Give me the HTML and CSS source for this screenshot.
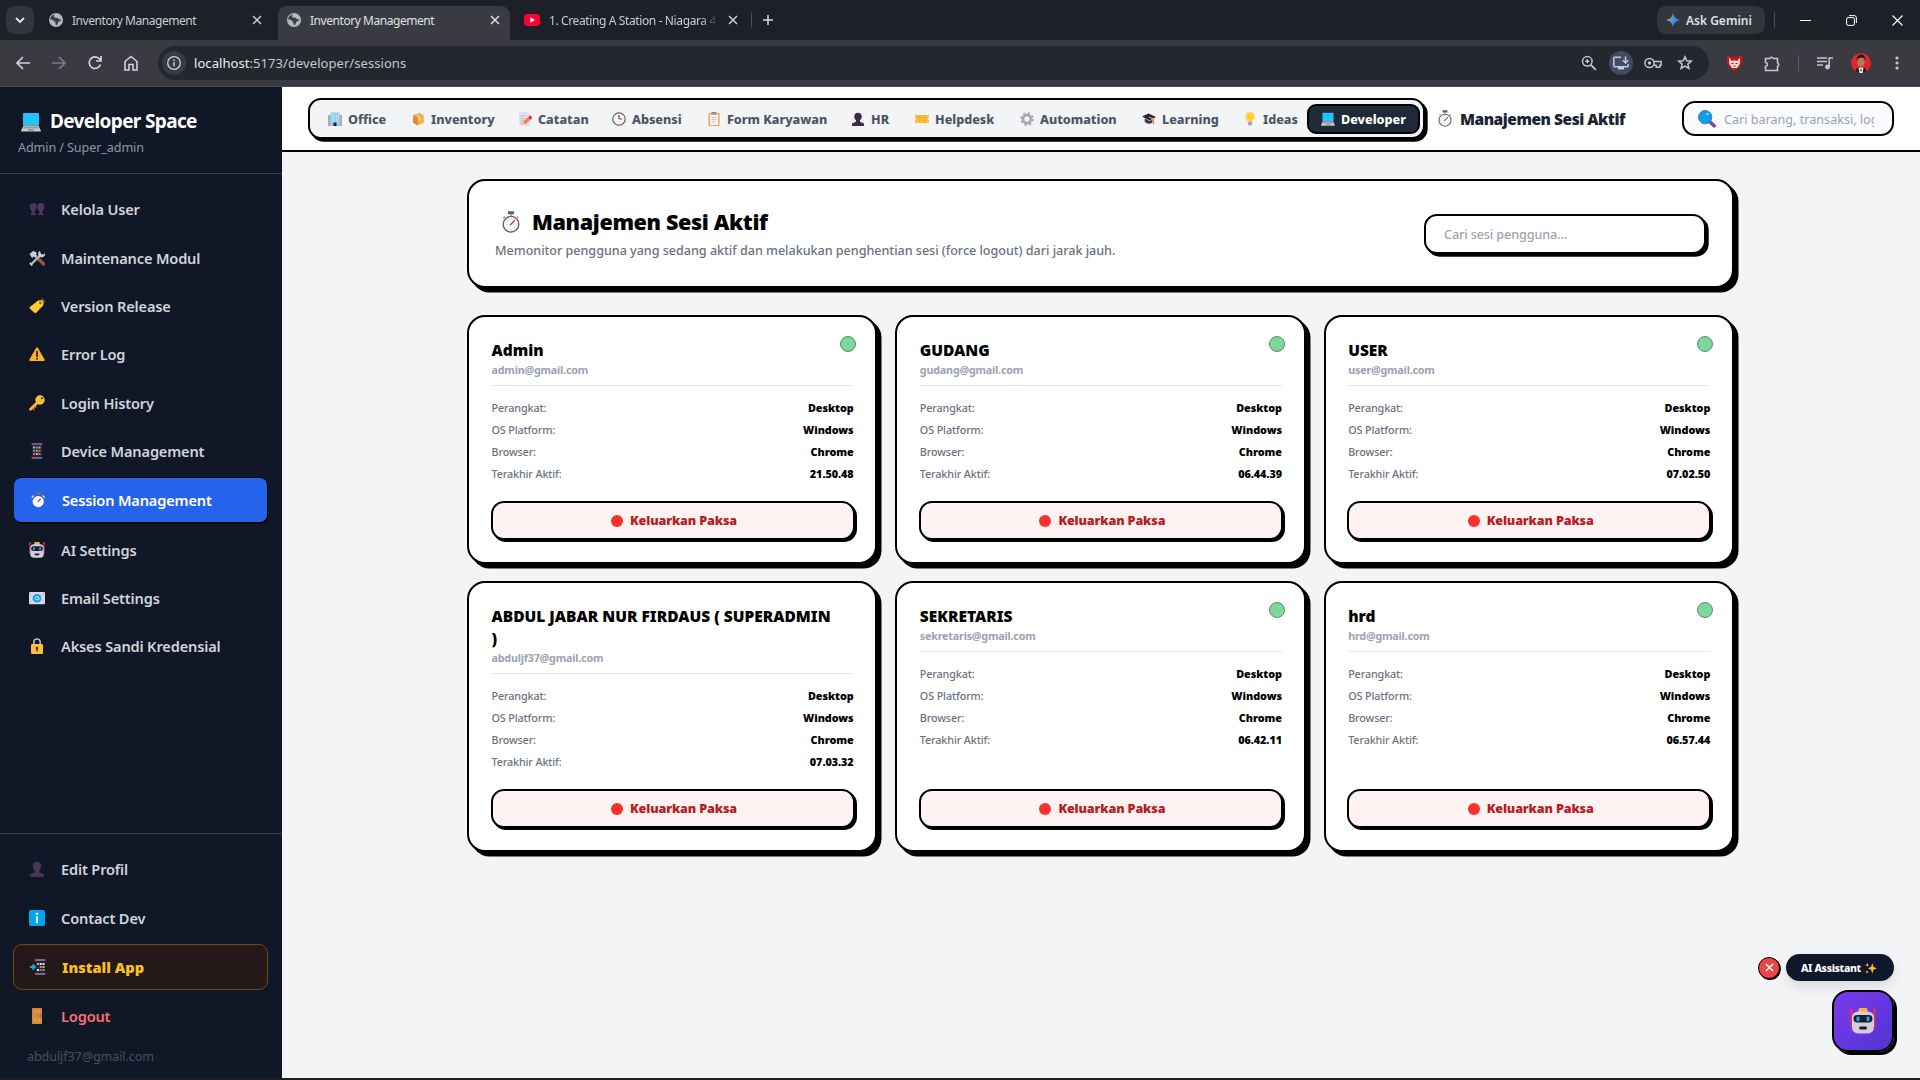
FILE: index.html
```html
<!DOCTYPE html>
<html lang="id">
<head>
<meta charset="utf-8">
<title>Inventory Management</title>
<link rel="stylesheet" href="styles.css">
</head>
<body>
<svg class="sprite" aria-hidden="true">
  <defs>
    <linearGradient id="gem" x1="0" y1="0.3" x2="1" y2="0.7"><stop offset="0" stop-color="#f5b942"/><stop offset="0.35" stop-color="#6f9c9a"/><stop offset="0.55" stop-color="#3f8bf4"/><stop offset="1" stop-color="#4a90ff"/></linearGradient>
    <symbol id="i-laptop" viewBox="0 0 20 20"><rect x="2" y="1" width="16" height="12.5" rx="1" fill="#26c0fb"/><path d="M2.500 13.500h15l2.300 5v1H.2v-1z" fill="#c9c9c9"/><path d="M3 14.500h14l.7 2H2.300z" fill="#9b9b9b"/><path d="M7 17.300h6v1.500H7z" fill="#8a8a8a"/></symbol>
    <symbol id="i-users" viewBox="0 0 16 16"><g fill="#4d365f"><path d="M4.200 2c2.300 0 3.600 1.700 3.600 3.800 0 1.700-1 3-1.900 3.900L5.600 12l1.800 2H1l1.800-2-.3-2.300C1.600 8.800.6 7.500.6 5.800.6 3.700 1.900 2 4.200 2z"/><path d="M11.800 2c2.300 0 3.600 1.700 3.600 3.800 0 1.700-1 3-1.900 3.900l-.3 2.300 1.800 2H8.600l1.800-2-.3-2.300c-.9-.9-1.900-2.200-1.900-3.900C8.200 3.700 9.500 2 11.800 2z"/></g></symbol>
    <symbol id="i-user" viewBox="0 0 16 16"><path d="M8 .8c2.500 0 4.300 1.900 4.300 4.300 0 1.900-.9 3.400-2 4.300v1.800l4.500 2V16H1.200v-2.800l4.500-2V9.400c-1.100-.9-2-2.400-2-4.300C3.700 2.700 5.500.8 8 .8z" fill="currentColor"/></symbol>
    <symbol id="i-tools" viewBox="0 0 16 16"><path d="M9 8.500l5.500 5.500" stroke="#a0563f" stroke-width="3.200" stroke-linecap="round"/><path d="M3 13.500L11.500 5" stroke="#b8bcc8" stroke-width="2.200" stroke-linecap="round"/><path d="M.5 4L4.500.8 8 3l-1 1.500L8.500 6 6.500 8 5 6.500 3 8z" fill="#c9cdd8"/><path d="M11 1l1 3 3 .5.8-2.300.2 3.300-2.500 2-3-.5L9 4.500 9.500 2z" fill="#c9cdd8"/><path d="M1 12l3 3-1.500 1L.5 14z" fill="#c9cdd8"/></symbol>
    <symbol id="i-tag" viewBox="0 0 16 16"><path d="M9 2.500l4.500-.3 1 .8-.3 4.500-7 7.300a1.200 1.200 0 0 1-1.700 0L.9 10.700a1.200 1.200 0 0 1 0-1.700z" fill="#ffc938"/><circle cx="11.400" cy="5" r="1.300" fill="#8a5a14"/><path d="M12 1.500c2.500-1.500 4.500 1 2.500 4" fill="none" stroke="#9a7a40" stroke-width=".9"/></symbol>
    <symbol id="i-warn" viewBox="0 0 16 16"><path d="M7.200 1.700a.9.900 0 0 1 1.600 0l6.800 11.900a.9.900 0 0 1-.8 1.400H1.200a.9.900 0 0 1-.8-1.400z" fill="#ffb02e"/><path d="M8 5.500v4.700" stroke="#2b2030" stroke-width="1.700" stroke-linecap="round"/><circle cx="8" cy="12.700" r="1" fill="#2b2030"/></symbol>
    <symbol id="i-key" viewBox="0 0 16 16"><path d="M8.500 7.500L1.500 14.300" stroke="#ffb92e" stroke-width="2.700" stroke-linecap="round"/><path d="M3.500 13l1.800 1.800M5.500 11l1.500 1.500" stroke="#e39d1f" stroke-width="1.300"/><circle cx="11" cy="5" r="4.700" fill="#ffbf38"/><circle cx="13" cy="3.300" r="1.100" fill="#54371a"/></symbol>
    <symbol id="i-phone" viewBox="0 0 16 16"><path d="M2.500 1a1 1 0 0 1 1-1h9a1 1 0 0 1 1 1v1h-11zM2.500 14h11v1a1 1 0 0 1-1 1h-9a1 1 0 0 1-1-1z" fill="#6c5a94"/><rect x="3" y="2" width="10" height="12" fill="#2b2233"/><g><path fill="#ffb02e" d="M4 3.500h2v2H4zM9.500 3.500h2v2h-2zM6.800 10h2v2h-2z"/><path fill="#26b4f0" d="M6.800 3.500h2v2h-2zM4 6.800h2v2H4zM9.500 10h2v2h-2z"/><path fill="#e8613c" d="M9.500 6.800h2v2h-2zM4 10h2v2H4z"/><path fill="#7fc98c" d="M6.800 6.800h2v2h-2z"/></g></symbol>
    <symbol id="i-install" viewBox="0 0 16 16"><path d="M5 1a1 1 0 0 1 1-1h8.500a1 1 0 0 1 1 1v1H5zM5 14h10.500v1a1 1 0 0 1-1 1H6a1 1 0 0 1-1-1z" fill="#7a669f"/><rect x="6" y="2" width="9" height="12" fill="#2b2233"/><path fill="#ffb02e" d="M7 4h2v2H7zM12.500 7h2v2h-2z"/><path fill="#e8e0f0" d="M9.800 4h2v2h-2zM7 10h2v2H7zM12.500 4h2v2h-2z"/><path fill="#5aa6e8" d="M9.800 7h2v2h-2zM12.500 10h2v2h-2z"/><path fill="#e8613c" d="M9.800 10h2v2h-2z"/><path d="M0 8h5M2.500 5.500L5 8l-2.500 2.500" stroke="#18a8e8" stroke-width="1.800" fill="none"/></symbol>
    <symbol id="i-watch" viewBox="0 0 18 22"><rect x="5.800" y=".3" width="6.400" height="3" rx=".8" fill="#5d6064"/><path d="M9 3v3M15 5.500l1.500 1.500M3 5.500L1.500 7" stroke="#8b8d91" stroke-width="1.300"/><circle cx="9" cy="13.200" r="7.800" fill="#fdfdfd" stroke="#626569" stroke-width="1.400"/><path d="M9 7.500v1.300M9 17.700V19M3.300 13.200h1.300M13.500 13.200h1.300M5 9l.8.800M5 17.300l.8-.8M13 17.300l-.8-.8" stroke="#aeb2b6" stroke-width=".9"/><path d="M8.500 13.800l4-4.300" stroke="#e0344c" stroke-width="1.400" stroke-linecap="round"/></symbol>
    <symbol id="i-watchw" viewBox="0 0 16 16"><rect x="6" y="0" width="4.500" height="3" fill="#6b6f7a"/><path d="M1.800 5.800l2-2.300M14.700 5.800l-2-2.300" stroke="#d8c8c0" stroke-width="1.500"/><circle cx="8.200" cy="9.600" r="5.600" fill="#fff"/><path d="M8 9.800l2.800-3" stroke="#e0344c" stroke-width="1.300"/></symbol>
    <symbol id="i-robot" viewBox="0 0 26 26"><path d="M1.500 1v18M24.500 1v18" stroke="#f0304c" stroke-width="1.700"/><circle cx="1.700" cy="2" r="1.500" fill="#f0304c"/><circle cx="24.300" cy="2" r="1.500" fill="#f0304c"/><rect x="8.500" y="0" width="9" height="5" rx="1.500" fill="#ffb02e"/><rect x="2" y="3.500" width="22" height="22" rx="6" fill="#d3cbe0"/><rect x="3.500" y="7" width="19" height="7.600" rx="3.800" fill="#1f1c26"/><rect x="6.500" y="8.500" width="3" height="4.800" rx="1" fill="#1aa7ec"/><rect x="16.500" y="8.500" width="3" height="4.800" rx="1" fill="#1aa7ec"/><rect x="9" y="18.500" width="8" height="3" rx="1.500" fill="#1f1c26"/></symbol>
    <symbol id="i-mail" viewBox="0 0 16 16"><rect x="0" y="2" width="16" height="12.300" rx="1" fill="#dcd8ea"/><path d="M0 3l6 5-6 5M16 3l-6 5 6 5" fill="none" stroke="#b6aecb" stroke-width=".7"/><circle cx="8" cy="8.200" r="4.300" fill="#159fe6"/><circle cx="8" cy="8.200" r="1.700" fill="none" stroke="#d9f2ff" stroke-width=".9"/><path d="M9.700 7v1.800q.8 1 1.300-.3" fill="none" stroke="#d9f2ff" stroke-width=".8"/></symbol>
    <symbol id="i-lock" viewBox="0 0 16 16"><path d="M4.800 7V4.200a3.200 3.200 0 0 1 6.400 0V7" fill="none" stroke="#b8bcc8" stroke-width="1.500"/><rect x="2" y="6" width="12" height="10" rx="1.300" fill="#ffbf38"/><circle cx="8" cy="10" r="1.300" fill="#3a2a1a"/><path d="M8 10v3.500" stroke="#3a2a1a" stroke-width="1.300"/></symbol>
    <symbol id="i-info" viewBox="0 0 16 16"><rect width="16" height="16" rx="2" fill="#00a6ed"/><circle cx="8" cy="3.700" r="1.300" fill="#fff"/><path d="M8 6.300v7" stroke="#fff" stroke-width="2"/></symbol>
    <symbol id="i-door" viewBox="0 0 16 16"><rect x="3" y="0" width="10" height="16" rx=".8" fill="#d3883e"/><path d="M5 2h2.500v3H5zM8.700 2h2.500v3H8.700zM5 10h2.500v4H5zM8.700 10h2.500v4H8.700z" fill="#e39a50"/><circle cx="11.500" cy="8" r=".8" fill="#6d4522"/></symbol>
    <symbol id="i-office" viewBox="0 0 14 14"><path d="M0 3h3v11H0zM11 3h3v11h-3z" fill="#a9adb5"/><rect x="2.500" y=".5" width="9" height="13.500" fill="#8ecdf2"/><path d="M4 2v9M6.200 2v9M8.400 2v9M10.300 2v9" stroke="#bfe4fa" stroke-width=".9"/><rect x="5.500" y="10.500" width="3" height="3.500" fill="#222"/></symbol>
    <symbol id="i-box" viewBox="0 0 14 14"><path d="M2.500 3L9 .8l3.700 2.600v7.300L6.500 13.500 2 10.500z" fill="#f5ae4a"/><path d="M2.500 3L6.700 6v7.400L2 10.500z" fill="#e0892f"/><path d="M5 2.200l4.300 3v3l-1.500.6V6z" fill="#ffe0a8"/></symbol>
    <symbol id="i-memo" viewBox="0 0 14 14"><path d="M1 0h8l3 3v11H1z" fill="#e2e0ea"/><path d="M2.500 4h5M2.500 6.500h4M2.500 9h3M2.500 11.500h6" stroke="#b6b0c6" stroke-width=".8"/><path d="M11.500 6.300L6 11" stroke="#ff7b3a" stroke-width="3.400"/><path d="M13.500 4.600L11.300 6.500" stroke="#e8305c" stroke-width="3.400"/><path d="M3.500 13l1.300-3 2 2z" fill="#ffc98a"/></symbol>
    <symbol id="i-clock" viewBox="0 0 14 14"><circle cx="7" cy="7" r="6.200" fill="#f6f6f6" stroke="#61656b" stroke-width="1.200"/><path d="M7 3v4" stroke="#3b3f45" stroke-width="1.100"/><path d="M7 7h3.300" stroke="#d43a5a" stroke-width="1.100"/></symbol>
    <symbol id="i-clip" viewBox="0 0 14 14"><rect x="1.500" y="1" width="11" height="13" rx="1" fill="#eda860"/><rect x="3" y="2.500" width="8" height="10.500" fill="#f6f3fb"/><path d="M4.500 5.500h5M4.500 7.700h5M4.500 10h3.500" stroke="#b9b2cc" stroke-width=".8"/><rect x="4.500" y="0" width="5" height="2.500" fill="#8a8e98"/></symbol>
    <symbol id="i-ticket" viewBox="0 0 14 14"><path d="M0 3h14v2.800a1.300 1.300 0 0 0 0 2.500V11H0V8.300a1.300 1.300 0 0 0 0-2.500z" fill="#ffbe3a"/><path d="M9.500 3v8" stroke="#d98c1c" stroke-width=".9" stroke-dasharray="1.300 1"/><path d="M2.500 5.500h5M2.500 8h3.500" stroke="#e8a02a" stroke-width=".9"/></symbol>
    <symbol id="i-gear" viewBox="0 0 14 14"><circle cx="7" cy="7" r="5.900" fill="none" stroke="#a6a4b0" stroke-width="1.800" stroke-dasharray="2.300 2.330"/><circle cx="7" cy="7" r="3.900" fill="none" stroke="#a6a4b0" stroke-width="2.500"/></symbol>
    <symbol id="i-cap" viewBox="0 0 14 14"><path d="M0 4.500L6.500 1.500 14 5 7.500 8.500z" fill="#2e2238"/><path d="M2.700 6.500v3.300Q6 13.500 10.500 10.500V7.400L7.500 9z" fill="#463457"/><path d="M7 5l4.500 2v5.500" fill="none" stroke="#f09a2a" stroke-width="1.300"/></symbol>
    <symbol id="i-bulb" viewBox="0 0 14 14"><path d="M7 0c2.700 0 4.600 2 4.600 4.500 0 2.200-1.500 3-2.100 5h-5c-.6-2-2.100-2.800-2.100-5C2.400 2 4.300 0 7 0z" fill="#ffd43a"/><rect x="5" y="9.500" width="4" height="4" rx="1" fill="#a9a6b3"/><path d="M5.500 4.500L7 6l1.500-1.500" fill="none" stroke="#f0a020" stroke-width=".8"/></symbol>
    <symbol id="i-search" viewBox="0 0 18 18"><path d="M11.500 11.500l4.600 4.300" stroke="#6a4f9c" stroke-width="3.600" stroke-linecap="round"/><circle cx="7.200" cy="7.200" r="6.600" fill="#0d9fea" stroke="#4f6db4" stroke-width="1"/><circle cx="9.500" cy="4" r="1" fill="#bfe9ff"/></symbol>
    <symbol id="i-globe" viewBox="0 0 14 14"><circle cx="7" cy="7" r="7" fill="#b4b7be"/><path d="M6.500 1.200L5 2.200v1.600L7 5l1.800-.3.700 1.300 2.200.3V8l-1.500.3-1.200 1.500-1.200 2.700-1.300-1.200V9L4.800 8.300 4.300 7 1 6.200A6.200 6.200 0 0 1 6.500 1.200z" fill="#3c3f47"/></symbol>
    <symbol id="i-x" viewBox="0 0 10 10"><path d="M1 1l8 8M9 1L1 9" stroke="currentColor" stroke-width="1.500" fill="none"/></symbol>
    <symbol id="i-spark" viewBox="0 0 12 12"><path d="M7.300 1.300L8.600 5l3.400 1.300L8.600 7.700 7.300 11.500 6 7.700 2.600 6.300 6 5z" fill="#ffb92e"/><path d="M2.200 1l.6 1.400 1.400.6-1.400.6-.6 1.400-.6-1.400L.2 3l1.400-.6zM2 8.300l.5 1.200 1.200.5-1.200.5L2 11.700l-.5-1.200L.3 10l1.200-.5z" fill="#ffc94a"/></symbol>
  </defs>
</svg>

<div class="tabstrip">
  <span class="tab-search"><svg width="10" height="10" viewBox="0 0 10 10"><path d="M1 3l4 4 4-4" fill="none" stroke="#e3e5ea" stroke-width="1.800"/></svg></span>
  <div class="tab"><svg class="fav"><use href="#i-globe"/></svg><span class="tab-title">Inventory Management</span><svg class="close"><use href="#i-x"/></svg></div>
  <div class="tab tab-active"><svg class="fav"><use href="#i-globe"/></svg><span class="tab-title">Inventory Management</span><svg class="close"><use href="#i-x"/></svg></div>
  <div class="tab tab-yt"><svg class="yt" viewBox="0 0 16 12"><rect width="16" height="12" rx="3" fill="#ff0033"/><path d="M6.300 3.200v5.600L11 6z" fill="#fff"/></svg><span class="tab-title fade">1. Creating A Station - Niagara 4</span><svg class="close"><use href="#i-x"/></svg></div>
  <span class="tab-sep"></span>
  <svg class="plus" viewBox="0 0 10 10"><path d="M5 0v10M0 5h10" stroke="#d5d8de" stroke-width="1.500"/></svg>
  <div class="gemini"><svg width="14" height="14" viewBox="0 0 14 14"><path d="M7 0c.6 4 3 6.400 7 7-4 .6-6.400 3-7 7-.6-4-3-6.400-7-7 4-.6 6.400-3 7-7z" fill="url(#gem)"/></svg><span>Ask Gemini</span></div>
  <span class="tab-sep win-sep"></span>
  <div class="win">
    <svg viewBox="0 0 11 11"><path d="M0 5.500h11" stroke="#fff" stroke-width="1"/></svg>
    <svg viewBox="0 0 11 11"><rect x=".6" y="2.600" width="7.800" height="7.800" rx="1.500" fill="none" stroke="#fff"/><path d="M3 .6h5.200a2.200 2.200 0 0 1 2.200 2.200V8" fill="none" stroke="#fff"/></svg>
    <svg viewBox="0 0 11 11"><path d="M.5.500l10 10M10.500.500l-10 10" stroke="#fff" stroke-width="1.100"/></svg>
  </div>
</div>

<div class="toolbar">
  <div class="navbtns">
    <svg viewBox="0 0 16 16"><path d="M15 8H2M8 2L2 8l6 6" fill="none" stroke="#d0d3da" stroke-width="1.700"/></svg>
    <svg viewBox="0 0 16 16"><path d="M1 8h13M8 2l6 6-6 6" fill="none" stroke="#7a7d85" stroke-width="1.700"/></svg>
    <svg viewBox="0 0 16 16"><path d="M13.500 9.500A5.800 5.800 0 1 1 12.500 4L14 5.600M14 1v5H9" fill="none" stroke="#d0d3da" stroke-width="1.700"/></svg>
    <svg viewBox="0 0 16 16"><path d="M2 15V6.500L8 1.500l6 5V15h-4V9.500H6V15z" fill="none" stroke="#d0d3da" stroke-width="1.600"/></svg>
  </div>
  <div class="omni">
    <span class="site"><svg width="14" height="14" viewBox="0 0 14 14"><circle cx="7" cy="7" r="6.300" fill="none" stroke="#d0d3da" stroke-width="1.300"/><path d="M7 6v4.300M7 3.400v1.500" stroke="#d0d3da" stroke-width="1.400"/></svg></span>
    <span class="url"><span class="host">localhost</span>:5173/developer/sessions</span>
    <div class="omni-icons">
      <svg viewBox="0 0 16 16"><circle cx="6.300" cy="6.300" r="4.800" fill="none" stroke="#c4c7ce" stroke-width="1.500"/><path d="M9.800 9.800l5 5" stroke="#c4c7ce" stroke-width="1.800"/><path d="M6.300 4.300v4M4.300 6.300h4" stroke="#c4c7ce" stroke-width="1.500"/></svg>
      <span class="pwa"><svg viewBox="0 0 16 14"><path d="M8 1.200H1.800q-1 0-1 1v7.600q0 1 1 1h12.400q1 0 1-1V8" fill="none" stroke="#c3cbe0" stroke-width="1.500"/><path d="M5 11h6v2.500H5z" fill="#c3cbe0"/><path d="M12.500.500v6.500M9.800 4.300l2.700 2.700 2.700-2.700" fill="none" stroke="#c3cbe0" stroke-width="1.500"/></svg></span>
      <svg class="wide" viewBox="0 0 18 12"><circle cx="5.500" cy="6" r="4.600" fill="none" stroke="#c4c7ce" stroke-width="1.500"/><circle cx="5.500" cy="6" r="1.700" fill="#c4c7ce"/><path d="M9.800 4.500h7.400v3.800h-1.400v1.900h-3.600V8.300H9.800" fill="none" stroke="#c4c7ce" stroke-width="1.400"/></svg>
      <svg viewBox="0 0 16 16"><path d="M8 1.800l1.800 4 4.400.4-3.300 2.900 1 4.300L8 11.100l-3.900 2.300 1-4.300L1.800 6.200l4.400-.4z" fill="none" stroke="#c4c7ce" stroke-width="1.500"/></svg>
    </div>
  </div>
  <div class="ext">
    <svg class="fox" viewBox="0 0 15 16"><path d="M0 0l4 2h7l4-2v8l-3 5-4.500 3L3 13 0 8z" fill="#d3131c"/><path d="M2 2.500l1.500 2L5 6l2.500-.7L10 6l1.500-1.500 1.500-2-.3 6.500-2.700 4H5L2.300 9z" fill="#f6ddd8"/><path d="M3.500 2.500h8L9.500 5h-4z" fill="#d3131c"/><path d="M4.500 8.500h2M8.500 8.500h2M6.500 11h2" stroke="#8a1015" stroke-width="1"/></svg>
    <svg class="puzzle" viewBox="0 0 17 17"><path d="M1.500 3.500h4.300a1.800 1.800 0 0 1 3.400 0h4.300v4.300a1.800 1.800 0 0 1 0 3.400v4.300h-12v-4q2-.4 2-2t-2-2z" fill="none" stroke="#c4c7ce" stroke-width="1.600"/></svg>
    <span class="ext-sep"></span>
    <svg class="music" viewBox="0 0 16 14"><path d="M0 2h10M0 5.500h10M0 9h6" stroke="#c4c7ce" stroke-width="1.600"/><circle cx="10.500" cy="11" r="2.400" fill="#c4c7ce"/><path d="M12.200 11V2H16" fill="none" stroke="#c4c7ce" stroke-width="1.600"/></svg>
    <svg class="avatar" viewBox="0 0 20 20"><circle cx="10" cy="10" r="10" fill="#e0262b"/><path d="M4.500 18.300Q5 14 10 14t5.500 4.300A10 10 0 0 1 10 20a10 10 0 0 1-5.500-1.700z" fill="#22202a"/><path d="M7.500 14.500h5L11.500 20h-3z" fill="#fff"/><ellipse cx="10" cy="8.800" rx="3.700" ry="5" fill="#b97850"/><path d="M5.800 8C5.500 3 8 1.800 10.300 1.800S14.600 3.500 14.200 8q-.6-3-2-3.300T8 4.900Q6.300 5.600 5.800 8z" fill="#1a1416"/><path d="M9.600 15.500h.8l.3 2.500-.7.800-.7-.8z" fill="#222"/></svg>
    <svg class="dots" viewBox="0 0 4 14"><circle cx="2" cy="2" r="1.600" fill="#c4c7ce"/><circle cx="2" cy="7" r="1.600" fill="#c4c7ce"/><circle cx="2" cy="12" r="1.600" fill="#c4c7ce"/></svg>
  </div>
</div>

<div class="page">
  <aside class="sidebar">
    <div class="brand">
      <div class="brand-row"><svg class="brand-icon"><use href="#i-laptop"/></svg><span class="brand-name">Developer Space</span></div>
      <div class="brand-sub">Admin / Super_admin</div>
    </div>
    <nav class="menu">
      <a class="item"><svg><use href="#i-users"/></svg><span>Kelola User</span></a>
      <a class="item"><svg><use href="#i-tools"/></svg><span>Maintenance Modul</span></a>
      <a class="item"><svg><use href="#i-tag"/></svg><span>Version Release</span></a>
      <a class="item"><svg><use href="#i-warn"/></svg><span>Error Log</span></a>
      <a class="item"><svg><use href="#i-key"/></svg><span>Login History</span></a>
      <a class="item"><svg><use href="#i-phone"/></svg><span>Device Management</span></a>
      <a class="item item-active"><svg><use href="#i-watchw"/></svg><span>Session Management</span></a>
      <a class="item"><svg><use href="#i-robot"/></svg><span>AI Settings</span></a>
      <a class="item"><svg><use href="#i-mail"/></svg><span>Email Settings</span></a>
      <a class="item"><svg><use href="#i-lock"/></svg><span>Akses Sandi Kredensial</span></a>
    </nav>
    <div class="menu-foot">
      <a class="item"><svg class="purple"><use href="#i-user"/></svg><span>Edit Profil</span></a>
      <a class="item"><svg><use href="#i-info"/></svg><span>Contact Dev</span></a>
      <a class="item item-install"><svg><use href="#i-install"/></svg><span>Install App</span></a>
      <a class="item item-logout"><svg><use href="#i-door"/></svg><span>Logout</span></a>
      <div class="account">abduljf37@gmail.com</div>
    </div>
  </aside>

  <div class="content">
    <header class="topbar">
      <nav class="modules">
        <a><svg><use href="#i-office"/></svg><span>Office</span></a>
        <a><svg><use href="#i-box"/></svg><span>Inventory</span></a>
        <a><svg><use href="#i-memo"/></svg><span>Catatan</span></a>
        <a><svg><use href="#i-clock"/></svg><span>Absensi</span></a>
        <a><svg><use href="#i-clip"/></svg><span>Form Karyawan</span></a>
        <a><svg class="dark"><use href="#i-user"/></svg><span>HR</span></a>
        <a><svg><use href="#i-ticket"/></svg><span>Helpdesk</span></a>
        <a><svg><use href="#i-gear"/></svg><span>Automation</span></a>
        <a><svg><use href="#i-cap"/></svg><span>Learning</span></a>
        <a><svg><use href="#i-bulb"/></svg><span>Ideas</span></a>
        <a class="mod-active"><svg><use href="#i-laptop"/></svg><span>Developer</span></a>
      </nav>
      <div class="crumb"><svg><use href="#i-watch"/></svg><span>Manajemen Sesi Aktif</span></div>
      <div class="search"><svg><use href="#i-search"/></svg><span class="ph">Cari barang, transaksi, log</span></div>
    </header>

    <main class="main">
      <section class="banner">
        <div>
          <h1><svg><use href="#i-watch"/></svg><span>Manajemen Sesi Aktif</span></h1>
          <p>Memonitor pengguna yang sedang aktif dan melakukan penghentian sesi (force logout) dari jarak jauh.</p>
        </div>
        <div class="filter">Cari sesi pengguna...</div>
      </section>

      <section class="grid">
        <article class="card">
          <i class="dot"></i>
          <h2>Admin</h2><div class="email">admin@gmail.com</div>
          <dl><div><dt>Perangkat:</dt><dd>Desktop</dd></div><div><dt>OS Platform:</dt><dd>Windows</dd></div><div><dt>Browser:</dt><dd>Chrome</dd></div><div><dt>Terakhir Aktif:</dt><dd>21.50.48</dd></div></dl>
          <button><i></i>Keluarkan Paksa</button>
        </article>
        <article class="card">
          <i class="dot"></i>
          <h2>GUDANG</h2><div class="email">gudang@gmail.com</div>
          <dl><div><dt>Perangkat:</dt><dd>Desktop</dd></div><div><dt>OS Platform:</dt><dd>Windows</dd></div><div><dt>Browser:</dt><dd>Chrome</dd></div><div><dt>Terakhir Aktif:</dt><dd>06.44.39</dd></div></dl>
          <button><i></i>Keluarkan Paksa</button>
        </article>
        <article class="card">
          <i class="dot"></i>
          <h2>USER</h2><div class="email">user@gmail.com</div>
          <dl><div><dt>Perangkat:</dt><dd>Desktop</dd></div><div><dt>OS Platform:</dt><dd>Windows</dd></div><div><dt>Browser:</dt><dd>Chrome</dd></div><div><dt>Terakhir Aktif:</dt><dd>07.02.50</dd></div></dl>
          <button><i></i>Keluarkan Paksa</button>
        </article>
        <article class="card">
          <h2>ABDUL JABAR NUR FIRDAUS ( SUPERADMIN )</h2><div class="email">abduljf37@gmail.com</div>
          <dl><div><dt>Perangkat:</dt><dd>Desktop</dd></div><div><dt>OS Platform:</dt><dd>Windows</dd></div><div><dt>Browser:</dt><dd>Chrome</dd></div><div><dt>Terakhir Aktif:</dt><dd>07.03.32</dd></div></dl>
          <button><i></i>Keluarkan Paksa</button>
        </article>
        <article class="card">
          <i class="dot"></i>
          <h2>SEKRETARIS</h2><div class="email">sekretaris@gmail.com</div>
          <dl><div><dt>Perangkat:</dt><dd>Desktop</dd></div><div><dt>OS Platform:</dt><dd>Windows</dd></div><div><dt>Browser:</dt><dd>Chrome</dd></div><div><dt>Terakhir Aktif:</dt><dd>06.42.11</dd></div></dl>
          <button><i></i>Keluarkan Paksa</button>
        </article>
        <article class="card">
          <i class="dot"></i>
          <h2>hrd</h2><div class="email">hrd@gmail.com</div>
          <dl><div><dt>Perangkat:</dt><dd>Desktop</dd></div><div><dt>OS Platform:</dt><dd>Windows</dd></div><div><dt>Browser:</dt><dd>Chrome</dd></div><div><dt>Terakhir Aktif:</dt><dd>06.57.44</dd></div></dl>
          <button><i></i>Keluarkan Paksa</button>
        </article>
      </section>
    </main>

    <div class="assistant">
      <div class="assistant-row"><span class="dismiss"><svg><use href="#i-x"/></svg></span><span class="pill"><span>AI Assistant</span><svg><use href="#i-spark"/></svg></span></div>
      <div class="bot"><svg><use href="#i-robot"/></svg></div>
    </div>
  </div>
</div>
</body>
</html>
```
FILE: styles.css
```css
* { box-sizing: border-box; }
body {
  margin: 0; width: 1920px; height: 1080px; overflow: hidden;
  background: #1e1f20; color: #000;
  font-family: "Noto Sans", "Open Sans", sans-serif;
  display: flex; flex-direction: column;
}
svg { display: block; flex: none; }
.sprite { position: absolute; width: 0; height: 0; }

/* Browser chrome */
.tabstrip { height: 40px; flex: none; background: #1d2027; display: flex; align-items: center; padding-left: 6px; }
.tab-search { width: 28px; height: 28px; border-radius: 9px; background: #34363d; display: flex; align-items: center; justify-content: center; }
.tab { width: 244px; height: 34px; align-self: flex-end; display: flex; align-items: center; padding: 0 16px 6px 15px; color: #c9ccd3; }
.tab .fav { width: 14px; height: 14px; margin-right: 9px; }
.tab .close { width: 10px; height: 10px; }
.tab-title { flex: 1; font-size: 12px; letter-spacing: -0.450px; white-space: nowrap; overflow: hidden; }
.tab-active { width: 232px; background: #3a3b41; border-radius: 9px 9px 0 0; padding: 0 10px 6px 9px; color: #dfe1e6; }
.tab-yt { width: 241px; padding: 0 13px 6px 14px; }
.yt { width: 16px; height: 12px; margin-right: 9px; }
.tab-yt .tab-title { margin-right: 10px; letter-spacing: -0.380px; }
.fade { -webkit-mask-image: linear-gradient(to right, #000 90%, transparent); mask-image: linear-gradient(to right, #000 90%, transparent); }
.tab-sep { width: 1px; height: 16px; background: #4a4d55; }
.plus { width: 10px; height: 10px; margin-left: 11px; }
.gemini { margin-left: auto; width: 108px; height: 28px; border-radius: 9px; background: #34363d; display: flex; align-items: center; gap: 6px; padding-left: 9px; color: #dfe1e6; font-size: 12px; font-weight: 600; white-space: nowrap; }
.win-sep { margin-left: 9px; }
.win { display: flex; gap: 35px; margin: 0 17px 0 25px; }
.win svg { width: 11px; height: 11px; }

.toolbar { height: 47px; flex: none; background: #3a3b41; border-bottom: 1px solid #4b4c52; display: flex; align-items: center; }
.navbtns { display: flex; gap: 20px; padding-left: 15px; width: 158px; }
.navbtns svg { width: 16px; height: 16px; }
.omni { width: 1551px; height: 34px; border-radius: 17px; background: #25272e; display: flex; align-items: center; padding-left: 4px; }
.site { width: 24px; height: 24px; border-radius: 50%; background: #3a3b41; display: flex; align-items: center; justify-content: center; }
.url { margin-left: 8px; font-size: 13px; letter-spacing: 0.060px; color: #c5c8cf; }
.host { color: #eceef2; }
.omni-icons { margin-left: auto; display: flex; align-items: center; padding-right: 16px; }
.omni-icons svg { width: 16px; height: 16px; }
.pwa { width: 24px; height: 24px; border-radius: 50%; background: #434a61; display: flex; align-items: center; justify-content: center; margin: 0 11px 0 12px; }
.omni-icons .pwa svg { height: 14px; }
.omni-icons .wide { width: 18px; height: 12px; margin-right: 15px; }
.ext { display: flex; align-items: center; flex: 1; padding-left: 18px; }
.fox { width: 15px; height: 16px; margin-right: 22px; }
.puzzle { width: 17px; height: 17px; margin-right: 17px; }
.ext-sep { width: 1px; height: 16px; background: #5b5d65; }
.music { width: 16px; height: 14px; margin: 0 18px 0 18px; }
.avatar { width: 20px; height: 20px; margin-right: 24px; }
.dots { width: 4px; height: 14px; }

/* Application */
.page { height: 991px; flex: none; display: flex; }
.sidebar { width: 282px; flex: none; background: #101726; display: flex; flex-direction: column; white-space: nowrap; }
.brand { height: 87px; padding: 19px 18px 0; border-bottom: 1px solid #364152; }
.brand-row { display: flex; align-items: center; height: 29px; gap: 9px; padding-left: 3px; }
.brand-icon { width: 20px; height: 20px; margin-top: 2px; }
.brand-name { font-size: 19px; font-weight: 700; letter-spacing: -0.640px; color: #fff; }
.brand-sub { font-size: 12.600px; line-height: 18px; margin-top: 4px; letter-spacing: -0.100px; color: #8d97a6; }
.menu { padding: 13px 14px 0; display: flex; flex-direction: column; gap: 4px; flex: 1; }
.item { display: flex; align-items: center; height: 44.400px; padding-left: 15px; gap: 16px; font-size: 14.600px; font-weight: 600; letter-spacing: -0.160px; color: #d0d4da; border-radius: 7px; }
.item svg { width: 16px; height: 16px; }
.purple { color: #4c3358; }
.item-active { height: 44px; margin: 1px 1px 1px 0; padding-left: 16px; background: #2563eb; color: #fff; box-shadow: 1px 2px 0 #000, 0 -1px 0 #05080f; }
.menu-foot { height: 245px; border-top: 1px solid #364152; padding: 13px 14px 0 13px; display: flex; flex-direction: column; gap: 4px; }
.menu-foot .item { padding-left: 16px; }
.menu-foot .item-install { height: 46px; border: 1px solid #6b4c16; background: #241819; color: #fbbf24; font-weight: 900; letter-spacing: 0; border-radius: 9px; }
.menu-foot .item-logout { color: #f87171; }
.account { padding-left: 14px; font-size: 12.600px; line-height: 18px; letter-spacing: -0.100px; color: #475060; margin-top: 6px; }

.content { flex: 1; background: #f3f4f6; display: flex; flex-direction: column; position: relative; white-space: nowrap; }
.topbar { height: 65px; background: #fff; border-bottom: 2px solid #000; display: flex; align-items: center; padding: 0 26px; }
.modules { width: 1117px; height: 41px; border: 2px solid #000; border-radius: 13px; background: #f3f4f6; box-shadow: 2.700px 2.700px 0 #000; display: grid; grid-template-columns: 83px 107px 94px 95px 144px 64px 105px 122px 101px 64px 113px; align-items: center; padding-left: 18px; }
.modules a { display: flex; align-items: center; gap: 6px; font-size: 12.600px; font-weight: 800; color: #4b5563; }
.modules span { position: relative; top: 0.600px; }
.modules svg { width: 14px; height: 14px; }
.dark { color: #3b2a48; }
.modules .mod-active { height: 30px; background: #1f2937; border: 2px solid #000; border-radius: 9px; padding-left: 12px; color: #fff; }
.crumb { margin-left: 13px; display: flex; align-items: center; gap: 8px; font-size: 15.500px; font-weight: 900; letter-spacing: -0.470px; color: #1a2433; }
.crumb svg { width: 14px; height: 17px; }
.search { margin-left: auto; width: 212px; height: 35px; border: 2px solid #000; border-radius: 13px; background: #f9fafb; display: flex; align-items: center; gap: 8px; padding: 0 18px 0 14px; font-size: 12.600px; color: #9ca3af; }
.search svg { width: 18px; height: 18px; }
.ph { overflow: hidden; flex: 1; padding-top: 1px; }

.main { width: 1267px; margin: 27px 0 0 185px; }
.banner { height: 109px; border: 2px solid #000; border-radius: 18px; background: #fff; box-shadow: 4.500px 4.500px 0 #000; display: flex; justify-content: space-between; align-items: center; padding: 0 26px; }
.banner h1 { margin: 0; display: flex; align-items: center; gap: 12px; font-size: 21.600px; line-height: 30px; font-weight: 900; letter-spacing: -0.370px; padding-left: 7px; }
.banner h1 svg { width: 18px; height: 22px; }
.banner p { margin: 4px 0 -1px; font-size: 12.600px; line-height: 20px; font-weight: 500; letter-spacing: -0.030px; color: #6b7280; }
.filter { width: 282px; height: 40px; border: 2px solid #000; border-radius: 13px; background: #fff; box-shadow: 2.700px 2.700px 0 #000; padding: 1px 0 0 18px; display: flex; align-items: center; font-size: 12.600px; font-weight: 500; letter-spacing: -0.100px; color: #9ca3af; }
.grid { display: grid; grid-template-columns: repeat(3, 1fr); gap: 17px 18px; margin-top: 27px; }
.card { position: relative; border: 2px solid #000; border-radius: 18px; background: #fff; box-shadow: 4.500px 4.500px 0 #000; padding: 22px 21.700px 22px 22.500px; display: flex; flex-direction: column; }
.dot { position: absolute; top: 19px; right: 19px; width: 16px; height: 16px; border-radius: 50%; background: #7bd99b; border: 1.500px solid #5f8a70; }
.card h2 { margin: 0; padding-right: 18px; font-size: 15.500px; line-height: 22px; font-weight: 900; white-space: normal; }
.email { font-size: 10.800px; line-height: 16px; padding: 1px 0 7px; font-weight: 700; letter-spacing: -0.220px; color: #9ca3af; border-bottom: 1px solid #e5e7eb; }
.card dl { margin: 14px 0 19px; display: grid; gap: 6px; }
.card dl div { display: flex; justify-content: space-between; font-size: 10.800px; line-height: 16px; }
.card dt { color: #6b7280; font-weight: 500; letter-spacing: -0.130px; }
.card dd { margin: 0; font-weight: 900; letter-spacing: -0.050px; }
.card button { margin: auto -1px 0; height: 39px; border: 2px solid #000; border-radius: 13px; background: #fef2f2; box-shadow: 2px 2px 0 #000; color: #b91c1c; font: 900 12.600px "Noto Sans", "Open Sans", sans-serif; letter-spacing: -0.140px; display: flex; align-items: center; justify-content: center; gap: 7px; padding: 0 0 0 3px; }
.card button i { width: 12px; height: 12px; border-radius: 50%; background: #f8312f; }

/* Floating assistant launcher */
.assistant { position: absolute; right: 26px; bottom: 26px; display: flex; flex-direction: column; align-items: flex-end; gap: 9px; }
.assistant-row { display: flex; align-items: center; gap: 6px; }
.dismiss { width: 22px; height: 22px; border-radius: 50%; background: #ef4444; border: 1.500px solid #000; box-shadow: 1px 1px 0 #000; color: #fff; display: flex; align-items: center; justify-content: center; }
.dismiss svg { width: 9px; height: 9px; }
.pill { width: 108px; height: 27px; border-radius: 14px; background: #0f172a; color: #fff; font-size: 10.500px; font-weight: 800; letter-spacing: -0.330px; display: flex; align-items: center; gap: 4px; padding-left: 15px; box-shadow: 0 6px 12px rgba(0,0,0,.1); }
.pill svg { width: 12px; height: 12px; }
.bot { width: 62px; height: 62px; border: 2px solid #000; border-radius: 16px; background: linear-gradient(135deg, #7c3aed, #4f35d0); box-shadow: 3px 3px 0 #000; display: flex; align-items: center; justify-content: center; }
.bot svg { width: 26px; height: 26px; }
```
